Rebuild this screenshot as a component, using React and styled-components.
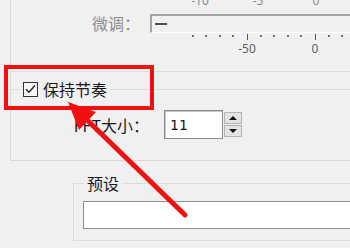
import React from 'react';
import styled, { createGlobalStyle } from 'styled-components';

const Global = createGlobalStyle`
  html, body { margin: 0; padding: 0; background: #f0f0f0; }
  body { font-family: "Noto Sans CJK SC", "Noto Sans", sans-serif; }
`;

const Page = styled.div`
  position: relative;
  width: 350px;
  height: 248px;
  overflow: hidden;
  background: #f0f0f0;
`;

const OuterGroup = styled.div`
  margin-left: 10px;
  height: 161px;
  box-sizing: border-box;
  border-left: 1px solid #d9d9d9;
  border-bottom: 1px solid #d9d9d9;
  display: flex;
  flex-direction: column;
`;

const FineSection = styled.div`
  display: grid;
  grid-template-columns: 139px 1fr;
  grid-template-rows: 14px 19px 8px 16px;
`;

const FieldLabel = styled.div`
  grid-column: 1;
  grid-row: 2;
  text-align: right;
  padding-right: ${(p) => p.$pr}px;
  font-size: 16px;
  line-height: 19px;
  color: ${(p) => (p.$disabled ? '#8d8d8d' : '#1a1a1a')};
  white-space: nowrap;
`;

const ScaleRow = styled.div`
  grid-column: 2;
  grid-row: ${(p) => p.$row};
  position: relative;
`;

const ScaleLabel = styled.span`
  position: absolute;
  top: ${(p) => p.$top}px;
  transform: translateX(-50%);
  font-family: "Noto Sans", "DejaVu Sans", sans-serif;
  font-size: 12px;
  line-height: 16px;
  color: ${(p) => p.$color};
  white-space: nowrap;
`;

const Frame = styled.div`
  grid-column: 2;
  grid-row: 2;
  box-sizing: border-box;
  border-top: 2px solid #a3a3a3;
  border-left: 2px solid #a3a3a3;
  border-bottom: 1px solid #ffffff;
  display: flex;
  align-items: flex-start;
`;

const Thumb = styled.div`
  margin: 7px 0 0 3px;
  width: 12px;
  height: 2px;
  background: #505050;
`;

const Dot = styled.span`
  position: absolute;
  top: 2px;
  width: 2px;
  height: 2px;
  margin-left: -1px;
  background: #6f6f6f;
`;

const MajorTick = styled.span`
  position: absolute;
  top: 1px;
  width: 1px;
  height: 6px;
  background: #555;
`;

const Divider = styled.div`
  margin-top: 14px;
  height: 1px;
  background: #dedede;
`;

const CheckGroup = styled.div`
  margin-top: 17px;
  border-top: 1px solid #dcdcdc;
  display: flex;
  flex-direction: column;
`;

const Legend = styled.div`
  align-self: flex-start;
  margin: -11px 0 0 ${(p) => p.$ml}px;
  height: 20px;
  padding: 0 3px;
  background: #f0f0f0;
  display: flex;
  align-items: center;
  gap: 5px;
  font-size: 16px;
  line-height: 20px;
  color: #1a1a1a;
`;

const CheckBox = styled.span`
  width: 15px;
  height: 15px;
  box-sizing: border-box;
  border: 1px solid #333;
  background: #f7f7f7;
  display: flex;
  align-items: center;
  justify-content: center;
`;

const FormRow = styled.div`
  margin-top: 11px;
  height: 29px;
  display: flex;
  align-items: center;
`;

const RowLabel = styled.div`
  width: ${(p) => p.$w}px;
  margin-right: ${(p) => p.$mr}px;
  text-align: right;
  font-size: 16px;
  color: #1a1a1a;
  white-space: nowrap;
`;

const SpinInput = styled.div`
  width: 59px;
  height: 29px;
  box-sizing: border-box;
  border: 1px solid #8a8a8a;
  box-shadow: inset 1px 1px 0 #c8c8c8;
  background: #fff;
  padding-left: 5px;
  display: flex;
  align-items: center;
  font-family: "DejaVu Sans", sans-serif;
  font-size: 14px;
  color: #111;
`;

const SpinButtons = styled.div`
  margin-left: 1px;
  display: flex;
  flex-direction: column;
  gap: 1px;
`;

const SpinButton = styled.div`
  width: 18px;
  height: 12px;
  box-sizing: border-box;
  border: 1px solid #b4b4b4;
  background: #e3e3e3;
  display: flex;
  align-items: center;
  justify-content: center;
`;

const Tri = styled.span`
  width: 0;
  height: 0;
  border-left: 4px solid transparent;
  border-right: 4px solid transparent;
  ${(p) =>
    p.$up ? 'border-bottom: 4px solid #111;' : 'border-top: 4px solid #111;'}
`;

const PresetGroup = styled.div`
  margin: 22px 0 0 73px;
  height: 58px;
  box-sizing: border-box;
  border: 1px solid #dcdcdc;
  border-right: none;
  display: flex;
  flex-direction: column;
`;

const TextBox = styled.div`
  margin: 8px 0 0 9px;
  width: 300px;
  height: 28px;
  box-sizing: border-box;
  border: 1px solid #8f8f8f;
  background: #fff;
`;

const Highlight = styled.div`
  position: absolute;
  left: 4px;
  top: 65px;
  width: 150px;
  height: 45px;
  box-sizing: border-box;
  border: 4px solid #f01010;
  pointer-events: none;
`;

const ArrowLayer = styled.svg`
  position: absolute;
  left: 0;
  top: 0;
  pointer-events: none;
`;

const topScale = [-10, -5, 0];
const topPos = (v) => 166 + v * 11.6;
const bottomPos = (v) => 165 + v * 1.36;
const dots = [];
for (let v = -90; v <= 20; v += 10) dots.push(v);
const majors = [-50, 0];

export default function App() {
  return (
    <>
      <Global />
      <Page>
        <OuterGroup>
          <FineSection>
            <ScaleRow $row={1}>
              {topScale.map((v) => (
                <ScaleLabel key={v} $top={-7} $color="#8a8a8a" style={{ left: topPos(v) }}>
                  {v}
                </ScaleLabel>
              ))}
            </ScaleRow>
            <FieldLabel $disabled $pr={10}>微调：</FieldLabel>
            <Frame>
              <Thumb />
            </Frame>
            <ScaleRow $row={3}>
              {dots
                .filter((v) => !majors.includes(v))
                .map((v) => (
                  <Dot key={v} style={{ left: bottomPos(v) }} />
                ))}
              {majors.map((v) => (
                <MajorTick key={v} style={{ left: bottomPos(v) }} />
              ))}
            </ScaleRow>
            <ScaleRow $row={4}>
              {majors.map((v) => (
                <ScaleLabel key={v} $top={0} $color="#5e5e5e" style={{ left: bottomPos(v) }}>
                  {v}
                </ScaleLabel>
              ))}
            </ScaleRow>
          </FineSection>
          <Divider />
          <CheckGroup>
            <Legend $ml={9}>
              <CheckBox>
                <svg width="11" height="10" viewBox="0 0 11 10">
                  <path d="M1 5.2 L4 8.2 L10 1.5" fill="none" stroke="#222" strokeWidth="1.4" />
                </svg>
              </CheckBox>
              保持节奏
            </Legend>
            <FormRow>
              <RowLabel $w={138} $mr={15}>FFT大小：</RowLabel>
              <SpinInput>11</SpinInput>
              <SpinButtons>
                <SpinButton>
                  <Tri $up />
                </SpinButton>
                <SpinButton>
                  <Tri />
                </SpinButton>
              </SpinButtons>
            </FormRow>
          </CheckGroup>
        </OuterGroup>
        <PresetGroup>
          <Legend $ml={10}>预设</Legend>
          <TextBox />
        </PresetGroup>
        <Highlight />
        <ArrowLayer width="350" height="248" viewBox="0 0 350 248">
          <line x1="185" y1="215" x2="84" y2="117" stroke="#f01010" strokeWidth="5" strokeLinecap="round" />
          <polygon points="68,102 96,112 79,130" fill="#f01010" />
        </ArrowLayer>
      </Page>
    </>
  );
}
